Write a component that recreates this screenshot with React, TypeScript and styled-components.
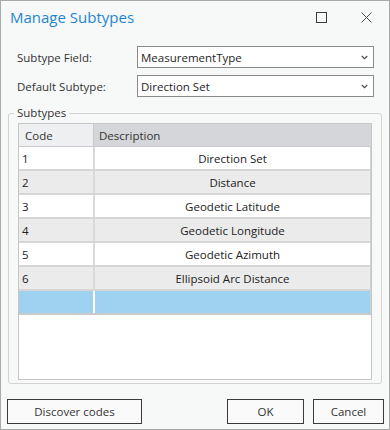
import React from "react";
import styled, { createGlobalStyle } from "styled-components";

const GlobalStyle = createGlobalStyle`
  html, body {
    margin: 0;
    padding: 0;
    background: #ffffff;
  }
`;

// dialog frame
const Window = styled.div`
  box-sizing: border-box;
  width: 390px;
  height: 430px;
  border: 1px solid #a9a9a9;
  background: #f7f8f8;
  display: flex;
  flex-direction: column;
  font-family: "Open Sans", "Noto Sans", sans-serif;
  font-size: 11.5px;
  color: #2b2b2b;
`;

const TitleBar = styled.div`
  display: flex;
  align-items: center;
  height: 32px;
  padding: 0 17px 0 9px;
`;

const Title = styled.div`
  flex: 1;
  font-size: 15px;
  color: #1f86d0;
`;

const TitleButtons = styled.div`
  display: flex;
  align-items: center;
  gap: 34px;
`;

const Form = styled.div`
  display: grid;
  grid-template-columns: 120px 1fr;
  row-gap: 7px;
  align-items: center;
  margin-top: 13px;
  padding: 0 15px 0 16px;
`;

const Label = styled.div`
  color: #333;
`;

const Combo = styled.div`
  box-sizing: border-box;
  height: 22px;
  border: 1px solid #8a8a8a;
  background: #fff;
  display: flex;
  align-items: center;
  justify-content: space-between;
  padding: 0 5px 0 3px;
  color: #1e1e1e;
`;

const Group = styled.fieldset`
  margin: 8px 7px 0 7px;
  padding: 0 9px 3px 9px;
  border: 1px solid #d3d3d3;
  border-radius: 3px;
`;

const Legend = styled.legend`
  padding: 0 3px;
  margin-left: -4px;
  line-height: 16px;
  color: #333;
`;

const Table = styled.div`
  box-sizing: border-box;
  height: 257px;
  margin-top: 2px;
  border: 1px solid #c6c6c6;
  background: #fff;
  display: flex;
  flex-direction: column;
`;

const HeaderRow = styled.div`
  display: grid;
  grid-template-columns: 74px 1fr;
  column-gap: 1px;
  height: 22px;
  background: #c9cacd;
  border-bottom: 1px solid #c9cacd;
`;

const HeaderCell = styled.div<{ $active?: boolean }>`
  display: flex;
  align-items: center;
  padding-left: ${(p) => (p.$active ? "5px" : "6px")};
  background: ${(p) => (p.$active ? "#d5d6d9" : "#eeeff0")};
  color: #333;
`;

const Row = styled.div<{ $shade: "light" | "dark" | "selected" }>`
  display: grid;
  grid-template-columns: 74px 1fr;
  column-gap: 2px;
  height: 22px;
  background: ${(p) => (p.$shade === "selected" ? "#ffffff" : "#dadada")};
  border-bottom: 2px solid ${(p) => (p.$shade === "selected" ? "#c9c9c9" : "#d6d6d6")};
  border-right: 1px solid #d0d0d0;
  > div {
    background: ${(p) =>
      p.$shade === "selected" ? "#9fd1f0" : p.$shade === "dark" ? "#ebebeb" : "#ffffff"};
  }
`;

const CodeCell = styled.div`
  display: flex;
  align-items: center;
  padding-left: 3px;
  color: #222;
`;

const DescCell = styled.div`
  display: flex;
  align-items: center;
  justify-content: center;
  color: #222;
`;

const Footer = styled.div`
  display: flex;
  justify-content: space-between;
  margin-top: 15px;
  padding: 0 5px 0 6px;
`;

const FooterRight = styled.div`
  display: flex;
  gap: 9px;
`;

const Button = styled.button<{ $w: number }>`
  box-sizing: border-box;
  width: ${(p) => p.$w}px;
  height: 25px;
  border: 1px solid #3a3a3a;
  background: #fafafa;
  font-family: "Open Sans", "Noto Sans", sans-serif;
  font-size: 11.5px;
  color: #333;
  padding: 0;
`;

const Chevron = () => (
  <svg width="7" height="5" viewBox="0 0 7 5">
    <path d="M0.8 1 L3.5 3.6 L6.2 1" fill="none" stroke="#4a4a4a" strokeWidth="1.2" />
  </svg>
);

const MaximizeIcon = () => (
  <svg width="11" height="11" viewBox="0 0 11 11">
    <rect x="0.5" y="0.5" width="10" height="10" fill="none" stroke="#3c3c3c" strokeWidth="1" />
  </svg>
);

const CloseIcon = () => (
  <svg width="11" height="11" viewBox="0 0 11 11">
    <path d="M0.5 0.5 L10.5 10.5 M10.5 0.5 L0.5 10.5" fill="none" stroke="#4a4a4a" strokeWidth="1" />
  </svg>
);

const subtypes = [
  { code: "1", desc: "Direction Set" },
  { code: "2", desc: "Distance" },
  { code: "3", desc: "Geodetic Latitude" },
  { code: "4", desc: "Geodetic Longitude" },
  { code: "5", desc: "Geodetic Azimuth" },
  { code: "6", desc: "Ellipsoid Arc Distance" },
];

function App() {
  return (
    <>
      <GlobalStyle />
      <Window>
        <TitleBar>
          <Title>Manage Subtypes</Title>
          <TitleButtons>
            <MaximizeIcon />
            <CloseIcon />
          </TitleButtons>
        </TitleBar>

        <Form>
          <Label>Subtype Field:</Label>
          <Combo>
            <span>MeasurementType</span>
            <Chevron />
          </Combo>
          <Label>Default Subtype:</Label>
          <Combo>
            <span>Direction Set</span>
            <Chevron />
          </Combo>
        </Form>

        <Group>
          <Legend>Subtypes</Legend>
          <Table>
            <HeaderRow>
              <HeaderCell>Code</HeaderCell>
              <HeaderCell $active>Description</HeaderCell>
            </HeaderRow>
            {subtypes.map((s, i) => (
              <Row key={s.code} $shade={i % 2 === 0 ? "light" : "dark"}>
                <CodeCell>{s.code}</CodeCell>
                <DescCell>{s.desc}</DescCell>
              </Row>
            ))}
            {/* new row placeholder */}
            <Row $shade="selected">
              <CodeCell />
              <DescCell />
            </Row>
          </Table>
        </Group>

        <Footer>
          <Button $w={135}>Discover codes</Button>
          <FooterRight>
            <Button $w={77}>OK</Button>
            <Button $w={71}>Cancel</Button>
          </FooterRight>
        </Footer>
      </Window>
    </>
  );
}

export default App;
